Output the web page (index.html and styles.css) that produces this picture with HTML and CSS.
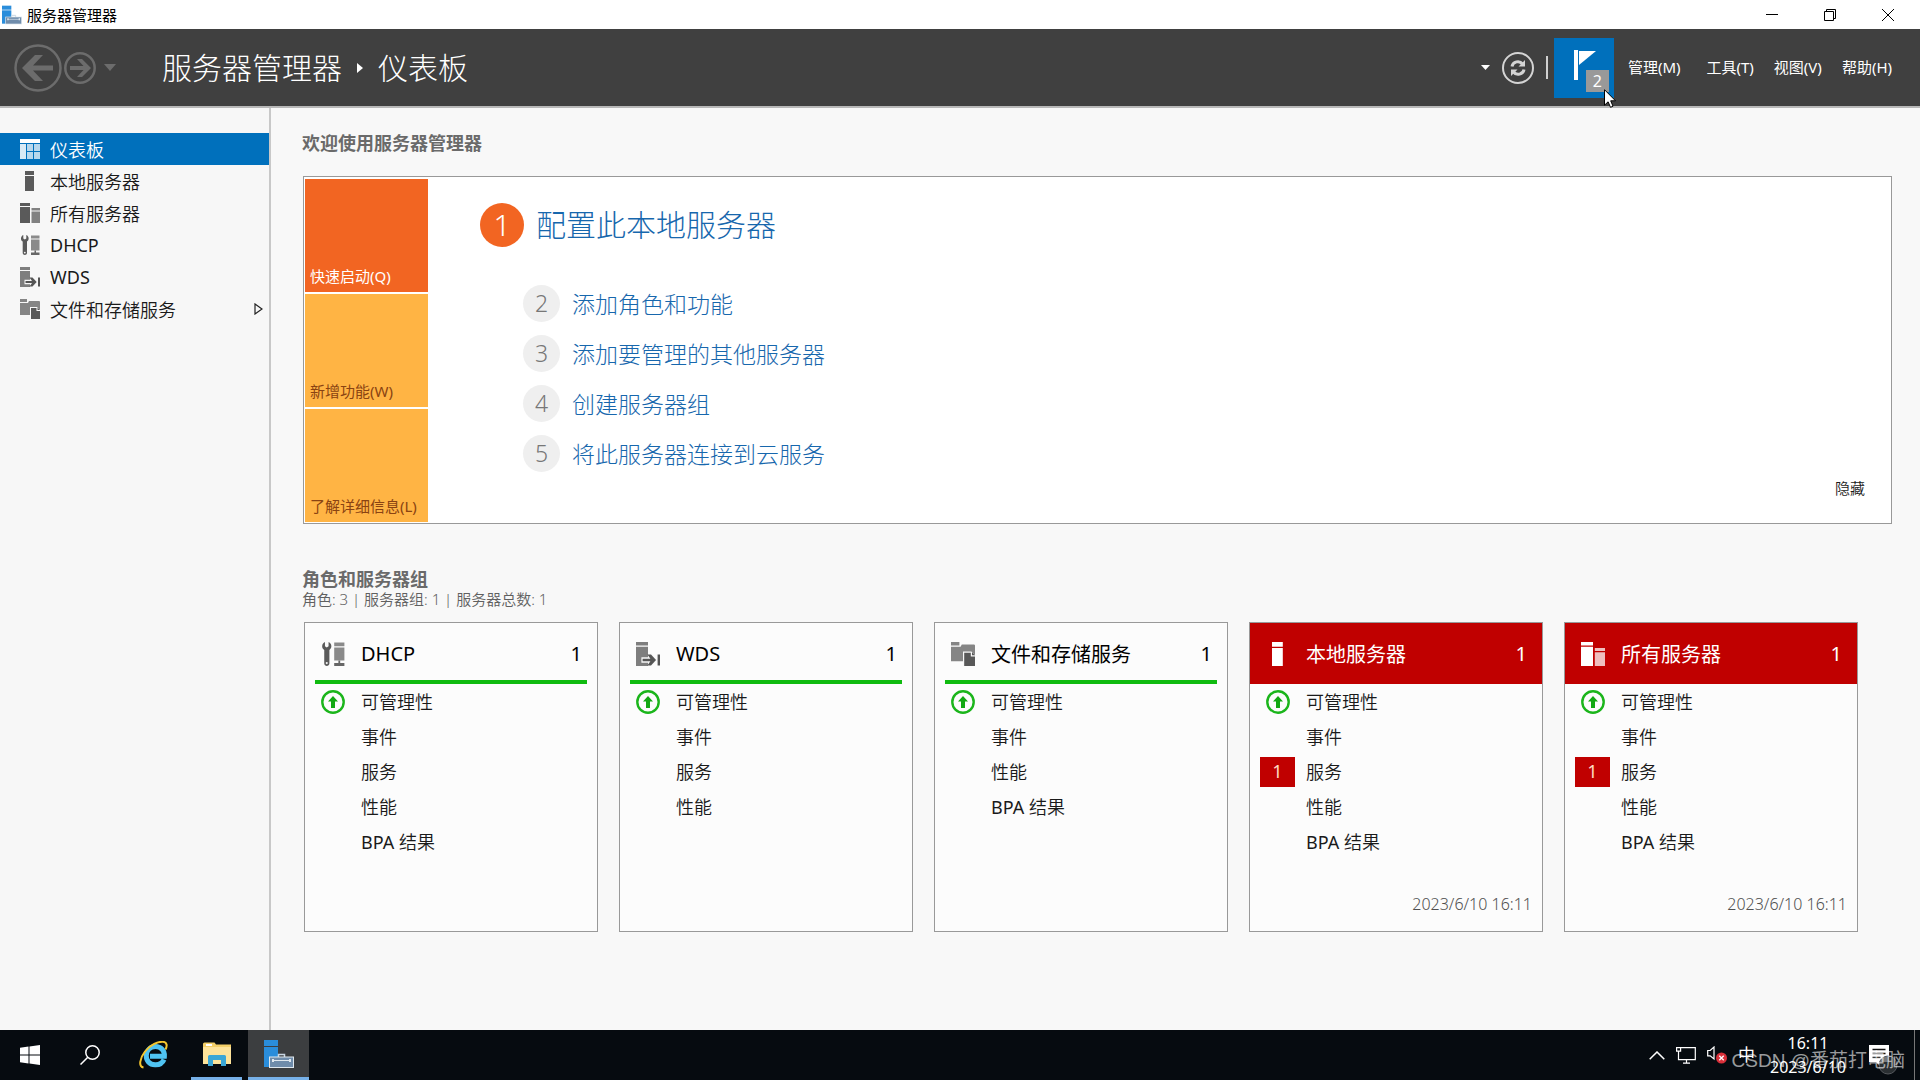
FILE: index.html
```html
<!DOCTYPE html>
<html lang="zh-CN">
<head>
<meta charset="utf-8">
<title>服务器管理器</title>
<link rel="stylesheet" href="styles.css">
</head>
<body>
<svg class="defs" aria-hidden="true">
  <symbol id="i-app" viewBox="0 0 30 28">
    <rect x="0" y="0" width="14" height="6" fill="#2a8ddb"/>
    <rect x="0" y="7" width="14" height="20" fill="#2a8ddb"/>
    <path d="M14.500 17v-2.500h6V17" fill="none" stroke="#c9d6e2" stroke-width="1.500"/>
    <rect x="5.500" y="17" width="24" height="10.500" fill="#6f8cab" stroke="#dfe7ee"/>
    <path d="M8 20.500h19" stroke="#dfe7ee"/>
    <path d="M9 19v3M26 19v3" stroke="#dfe7ee" stroke-width="2"/>
  </symbol>
  <symbol id="i-dash" viewBox="0 0 20 20">
    <path d="M0 0h20v4H0z" fill="#fff"/>
    <path d="M0 5h6v15H0z" fill="#fff" opacity=".85"/>
    <path d="M7 5h6v7H7zM14 5h6v7h-6zM7 13h6v7H7zM14 13h6v7h-6z" fill="#fff" opacity=".72"/>
  </symbol>
  <symbol id="i-server" viewBox="0 0 20 20">
    <path d="M5 0h9v4H5zM5 5h9v15H5z" fill="currentColor"/>
  </symbol>
  <symbol id="i-servers" viewBox="0 0 20 20">
    <path d="M0 0h10v3H0zM0 4h10v16H0z" fill="currentColor"/>
    <path d="M11.500 5H20v2.500h-8.500zM11.500 8.500H20V20h-8.500z" fill="currentColor" opacity=".75"/>
  </symbol>
  <symbol id="i-dhcp" viewBox="0 0 20 20">
    <path d="M11 .5h8.500v3H11zM11 4.500h8.500v11H11z" fill="#8a8a8a"/>
    <path d="M14.500 15.500h1.500v2h3.500V20h-8.500v-2.500h3.500z" fill="#666"/>
    <path d="M3.300 0v3.500l1.500 1 1.500-1V0C8 .7 8.800 2.200 8.600 4c-.1 1.200-.8 2-1.600 2.600V18c0 2.600-4.300 2.600-4.300 0V6.600C1.700 6 1 5.200 1 4 .8 2.200 1.700.7 3.300 0z" fill="#5a5a5a"/>
    <circle cx="4.800" cy="17.600" r=".9" fill="#f4f4f4"/>
  </symbol>
  <symbol id="i-wds" viewBox="0 0 20 20">
    <path d="M0 0h10v3H0zM0 4h10v16H0z" fill="#7e7e7e"/>
    <path d="M4.500 12.700h5.500V9.500h3l5 5.500-5 5h-3v-2.700H4.500z" fill="#f8f8f8"/>
    <path d="M5.500 14h6.500l-2.500-3.500h3l4.200 4.500-4.200 4.500h-3L12 16H5.500zM18 10.500h2v9h-2z" fill="#555"/>
  </symbol>
  <symbol id="i-files" viewBox="0 0 20 20">
    <path d="M0 0h7v3H0zM0 4h8l1-2h10q1 0 1 1v13H0z" fill="#858585"/>
    <path d="M10 8h7l3 3v9H10z" fill="#f8f8f8"/>
    <path d="M11 9h5.500v3H20v8h-9zM17.500 8.500l2.500 2.500h-2.500z" fill="#585858"/>
  </symbol>
  <symbol id="i-up" viewBox="0 0 24 24">
    <circle cx="12" cy="12" r="10.700" fill="none" stroke="#1bb51b" stroke-width="2.400"/>
    <path d="M12 6l5 5.500h-3V18h-4v-6.500H7z" fill="#12a812"/>
  </symbol>
</svg>

<header class="titlebar">
  <svg class="titlebar-icon"><use href="#i-app"/></svg>
  <span class="titlebar-text">服务器管理器</span>
  <button class="win-btn" aria-label="最小化"><svg viewBox="0 0 12 12"><path d="M0 5.500h12"/></svg></button>
  <button class="win-btn" aria-label="还原"><svg viewBox="0 0 12 12"><path d="M.5 2.500h9v9h-9zM2.500 2.500v-2h9v9h-2"/></svg></button>
  <button class="win-btn" aria-label="关闭"><svg viewBox="0 0 12 12"><path d="M0 0l12 12M12 0L0 12"/></svg></button>
</header>

<div class="banner">
  <div class="history">
    <button class="icon-btn" aria-label="后退"><svg width="48" height="48" viewBox="0 0 48 48"><circle cx="24" cy="24" r="22.500" fill="none" stroke="#6c6c6c" stroke-width="2.500"/><path d="M8 24l13-13h8l-10 10.500h20v5H19L29 37h-8z" fill="#6c6c6c"/></svg></button>
    <button class="icon-btn" aria-label="前进"><svg width="32" height="32" viewBox="0 0 32 32"><circle cx="16" cy="16" r="14.700" fill="none" stroke="#6c6c6c" stroke-width="2.500"/><path d="M27 16l-9 9h-5l6.500-7H6v-4h13.500L13 7h5z" fill="#6c6c6c"/></svg></button>
    <button class="icon-btn caret" aria-label="历史记录"><svg width="12" height="7" viewBox="0 0 12 7"><path d="M0 0h12L6 7z" fill="#6c6c6c"/></svg></button>
  </div>
  <h1 class="crumbs">服务器管理器<svg class="crumb-sep" viewBox="0 0 6 10"><path d="M0 0l6 5-6 5z" fill="#fff"/></svg>仪表板</h1>
  <div class="tools">
    <button class="icon-btn" aria-label="更多"><svg width="9" height="5" viewBox="0 0 9 5"><path d="M0 0h9L4.500 5z" fill="#fff"/></svg></button>
    <button class="icon-btn" aria-label="刷新"><svg width="32" height="32" viewBox="0 0 32 32" fill="none" stroke="#d4d4d4"><circle cx="16" cy="16" r="15" stroke-width="2"/><path d="M10 14.500c.8-5 7.500-6.500 10.500-2.500M22 17.500c-.8 5-7.500 6.500-10.500 2.500" stroke-width="3"/><path d="M23 8v6.500h-6.500zM9 24v-6.500h6.500z" fill="#d4d4d4" stroke="none"/></svg></button>
    <span class="divider"></span>
    <button class="flag" aria-label="通知">
      <svg width="22" height="30" viewBox="0 0 22 30"><path d="M0 0h4v30H0z" fill="#fff"/><path d="M5 1h17L5 15z" fill="#fff"/></svg>
      <span class="flag-count">2</span>
      <svg class="cursor" viewBox="0 0 12 19"><path d="M.5.7v15.500l3.600-3.400 2.400 5.500 2.500-1.100-2.300-5.400h4.800z" fill="#fff" stroke="#000"/></svg>
    </button>
    <nav class="menus">
      <button>管理(M)</button><button>工具(T)</button><button>视图(V)</button><button>帮助(H)</button>
    </nav>
  </div>
</div>

<div class="body">
  <nav class="side">
    <a class="side-item active" href="#"><svg><use href="#i-dash"/></svg>仪表板</a>
    <a class="side-item" href="#"><svg><use href="#i-server"/></svg>本地服务器</a>
    <a class="side-item" href="#"><svg><use href="#i-servers"/></svg>所有服务器</a>
    <a class="side-item latin" href="#"><svg><use href="#i-dhcp"/></svg>DHCP</a>
    <a class="side-item latin" href="#"><svg><use href="#i-wds"/></svg>WDS</a>
    <a class="side-item" href="#"><svg><use href="#i-files"/></svg>文件和存储服务<svg class="expand" viewBox="0 0 9 12"><path d="M1 1l7 5-7 5z" fill="none" stroke="#222" stroke-width="1.200"/></svg></a>
  </nav>

  <main class="main">
    <h2 class="section-title">欢迎使用服务器管理器</h2>
    <section class="welcome">
      <div class="tabs">
        <button class="tab tab-on">快速启动(Q)</button>
        <button class="tab">新增功能(W)</button>
        <button class="tab">了解详细信息(L)</button>
      </div>
      <ol class="steps">
        <li class="step step-first"><span class="num">1</span><a href="#">配置此本地服务器</a></li>
        <li class="step"><span class="num">2</span><a href="#">添加角色和功能</a></li>
        <li class="step"><span class="num">3</span><a href="#">添加要管理的其他服务器</a></li>
        <li class="step"><span class="num">4</span><a href="#">创建服务器组</a></li>
        <li class="step"><span class="num">5</span><a href="#">将此服务器连接到云服务</a></li>
      </ol>
      <button class="hide">隐藏</button>
    </section>

    <h2 class="section-title groups-title">角色和服务器组</h2>
    <p class="summary">角色: 3 | 服务器组: 1 | 服务器总数: 1</p>
    <div class="cards">
      <article class="card">
        <h3 class="card-head"><svg class="card-icon"><use href="#i-dhcp"/></svg><span>DHCP</span><span>1</span></h3>
        <ul>
          <li><svg class="ok"><use href="#i-up"/></svg><span>可管理性</span></li>
          <li><span>事件</span></li><li><span>服务</span></li><li><span>性能</span></li><li><span><span class="latin">BPA</span> 结果</span></li>
        </ul>
      </article>
      <article class="card">
        <h3 class="card-head"><svg class="card-icon"><use href="#i-wds"/></svg><span>WDS</span><span>1</span></h3>
        <ul>
          <li><svg class="ok"><use href="#i-up"/></svg><span>可管理性</span></li>
          <li><span>事件</span></li><li><span>服务</span></li><li><span>性能</span></li>
        </ul>
      </article>
      <article class="card">
        <h3 class="card-head"><svg class="card-icon"><use href="#i-files"/></svg><span>文件和存储服务</span><span>1</span></h3>
        <ul>
          <li><svg class="ok"><use href="#i-up"/></svg><span>可管理性</span></li>
          <li><span>事件</span></li><li><span>性能</span></li><li><span><span class="latin">BPA</span> 结果</span></li>
        </ul>
      </article>
      <article class="card alert">
        <h3 class="card-head"><svg class="card-icon"><use href="#i-server"/></svg><span>本地服务器</span><span>1</span></h3>
        <ul>
          <li><svg class="ok"><use href="#i-up"/></svg><span>可管理性</span></li>
          <li><span>事件</span></li><li><b class="count">1</b><span>服务</span></li><li><span>性能</span></li><li><span><span class="latin">BPA</span> 结果</span></li>
        </ul>
        <time>2023/6/10 16:11</time>
      </article>
      <article class="card alert">
        <h3 class="card-head"><svg class="card-icon"><use href="#i-servers"/></svg><span>所有服务器</span><span>1</span></h3>
        <ul>
          <li><svg class="ok"><use href="#i-up"/></svg><span>可管理性</span></li>
          <li><span>事件</span></li><li><b class="count">1</b><span>服务</span></li><li><span>性能</span></li><li><span><span class="latin">BPA</span> 结果</span></li>
        </ul>
        <time>2023/6/10 16:11</time>
      </article>
    </div>
  </main>
</div>

<footer class="taskbar">
  <button class="task" aria-label="开始"><svg width="20" height="20" viewBox="0 0 20 20"><path d="M0 2.800L8.500 1.600V9.500H0zM9.500 1.400L20 0v9.500H9.500zM0 10.500h8.500v8L0 17.300zM9.500 10.500H20V20L9.500 18.600z" fill="#fff"/></svg></button>
  <button class="task" aria-label="搜索"><svg width="20" height="20" viewBox="0 0 20 20" fill="none" stroke="#fff" stroke-width="1.500"><circle cx="12.500" cy="7.500" r="6.700"/><path d="M7.800 12.200L.5 19.500"/></svg></button>
  <button class="task browser" aria-label="Internet Explorer"><svg width="30" height="28" viewBox="0 0 30 28" fill="none"><path d="M25 18.500c-1.500 3.500-5 5.500-9 5.300-5.500-.2-9-4.300-8.700-9.300.3-5.500 4.200-9 9.200-9 5.500 0 9.300 4 8.900 9.700H11" stroke="#4fc3f2" stroke-width="5"/><path d="M4.500 26.500C-1 25.500 1 17 6 10.500 11.500 3.500 19 .5 24 .8c4 .3 4.500 4 2.500 7.700" stroke="#f5c62e" stroke-width="2"/></svg></button>
  <button class="task running" aria-label="文件资源管理器"><svg width="28" height="24" viewBox="0 0 28 24"><path d="M0 2q0-1.500 1.500-1.500h10L13 2.500h15V22H0z" fill="#f3cf68"/><path d="M0 5h28v17H0z" fill="#fde39a"/><path d="M3 2h6v2H3z" fill="#fff"/><path d="M5 24V14.500Q5 13 6.500 13h15q1.500 0 1.500 1.500V24h-5v-6h-8v6z" fill="#3ba7d6"/></svg></button>
  <button class="task running current" aria-label="服务器管理器"><svg width="30" height="28"><use href="#i-app"/></svg></button>
  <div class="tray">
    <svg width="16" height="9" viewBox="0 0 16 9" fill="none" stroke="#fff" stroke-width="1.500"><path d="M.7 8.300L8 1l7.300 7.300"/></svg>
    <svg width="20" height="17" viewBox="0 0 20 17" fill="none" stroke="#fff" stroke-width="1.200"><path d="M5 .7h14.300v12H2.500V6.500M10.500 13v3M7 16.200h7M.6.7h4v3.500h-4zM2.500 4v3"/></svg>
    <svg width="20" height="18" viewBox="0 0 20 18"><path d="M.7 4.500h2.500L7 1v12L3.200 9.800H.7z" fill="none" stroke="#fff" stroke-width="1.200"/><circle cx="14.500" cy="12" r="5.500" fill="#d9303a"/><path d="M12.300 9.800l4.400 4.400M16.700 9.800l-4.400 4.400" stroke="#fff" stroke-width="1.300"/></svg>
    <span class="ime">中</span>
    <div class="clock"><span>16:11</span><span>2023/6/10</span></div>
    <svg class="notice" width="29" height="31" viewBox="0 0 29 31"><path d="M0 0h20v17h-9v4l-4-4H0z" fill="#fff"/><path d="M3.500 4.500h13M3.500 8.500h13M3.500 12.500h8" stroke="#111" stroke-width="1.500"/><circle cx="19" cy="20" r="9" fill="#3a3e42" fill-opacity=".7" stroke="#55595d"/></svg>
    <span class="show-desktop"></span>
    <span class="watermark">CSDN @番茄打电脑</span>
  </div>
</footer>
</body>
</html>
```
FILE: styles.css
```css
* { box-sizing: border-box; }

body {
  margin: 0;
  min-height: 100vh;
  display: grid;
  grid-template-rows: 29px 79px 1fr 50px;
  background: #f8f8f8;
  color: #1a1a1a;
  font-family: "Noto Sans", "Noto Sans CJK SC", sans-serif;
  font-size: 18px;
  font-weight: 350;
}

button {
  padding: 0;
  border: 0;
  background: none;
  color: inherit;
  font: inherit;
}

a { color: inherit; text-decoration: none; }
h1, h2, h3, p, ul, ol { margin: 0; padding: 0; font: inherit; list-style: none; }
svg { display: block; flex: none; }
.defs { position: absolute; width: 0; height: 0; }
.latin { font-weight: 400; }

/* Title bar */
.titlebar { display: flex; align-items: center; padding-right: 3px; background: #fff; color: #000; }
.titlebar-icon { width: 20px; height: 20px; margin: 0 5px 0 2px; }
.titlebar-text { flex: 1; font-size: 15px; line-height: 28px; font-weight: 400; }
.win-btn { width: 58px; height: 28px; display: grid; place-items: center; }
.win-btn svg { width: 12px; height: 12px; fill: none; stroke: #000; }

/* Banner */
.banner {
  display: flex;
  align-items: center;
  background: #404040;
  border-bottom: 2px solid #b8b8b8;
  color: #fff;
}
.history { width: 162px; display: flex; align-items: center; gap: 2px; padding-left: 14px; }
.icon-btn { display: grid; place-items: center; }
.caret { margin-left: 6px; }
.crumbs { display: flex; align-items: center; gap: 15px; font-size: 30px; line-height: 40px; font-weight: 300; }
.crumb-sep { width: 6px; height: 10px; }
.tools { margin-left: auto; display: flex; align-items: center; padding-right: 28px; gap: 12px; }
.divider { width: 2px; height: 23px; background: #d0d0d0; }
.flag {
  position: relative;
  display: flex;
  align-items: flex-start;
  width: 60px;
  height: 60px;
  margin-left: -6px;
  padding: 12px 0 0 20px;
  background: #0070bc;
}
.flag-count {
  position: absolute;
  right: 5px;
  bottom: 6px;
  width: 23px;
  height: 22px;
  background: #999;
  font-size: 16px;
  line-height: 23px;
  font-weight: 400;
}
.cursor { position: absolute; left: 50px; top: 51px; width: 12px; height: 19px; }
.menus { display: flex; gap: 20px; padding-left: 2px; font-size: 15px; line-height: 22px; font-weight: 400; }
.menus button { padding-bottom: 2px; }
.menus button:first-child { margin-right: 6px; }

/* Navigation */
.body { display: grid; grid-template-columns: 271px 1fr; }
.side { padding-top: 25px; border-right: 2px solid #c8c8c8; background: #f7f7f7; }
.side-item { display: flex; align-items: center; height: 32px; padding: 0 6px 0 20px; gap: 10px; }
.side-item svg { width: 20px; height: 20px; color: #5a5a5a; }
.side-item .expand { width: 9px; height: 12px; margin-left: auto; }
.active { background: #0070bc; color: #fff; }

/* Dashboard */
.main { padding: 21px 28px 40px 32px; }
.section-title { margin-left: -1px; color: #6a6a6a; font-weight: 700; line-height: 28px; }
.welcome {
  display: flex;
  margin: 19px 0 0;
  padding: 2px 1px 1px;
  border: 1px solid #999;
  background: #fff;
}
.tabs { width: 123px; display: grid; grid-auto-rows: 113px; gap: 2px; }
.tab {
  display: flex;
  align-items: flex-end;
  padding: 0 5px 5px;
  background: #ffb444;
  color: #8a4312;
  font-size: 15px;
  line-height: 22px;
  font-weight: 400;
}
.tab-on { background: #f26522; color: #fff; }
.steps { flex: 1; padding: 24px 0 0 95px; font-weight: 300; }
.step { display: flex; align-items: center; gap: 12px; height: 37px; margin-bottom: 13px; color: #1767ad; font-size: 23px; line-height: 32px; }
.step .num { width: 37px; height: 37px; border-radius: 50%; background: #efefef; color: #777; text-align: center; line-height: 36px; }
.step-first { height: 44px; margin: 0 0 38px -43px; font-size: 30px; line-height: 44px; }
.step-first .num { width: 44px; height: 44px; background: #f26522; color: #fff; line-height: 43px; }
.hide { align-self: flex-end; margin: 0 25px 23px 0; font-size: 15px; line-height: 22px; }

.groups-title { margin-top: 44px; line-height: 22px; }
.summary { margin: 0 0 14px -1px; color: #606060; font-size: 15px; line-height: 18px; }

.cards { display: grid; grid-template-columns: repeat(auto-fill, 294px); gap: 21px; padding-left: 1px; }
.card { display: flex; flex-direction: column; min-height: 310px; border: 1px solid #999; background: #fcfcfc; }
.card-head, .card li { display: grid; grid-template-columns: 35px 1fr auto; column-gap: 11px; align-items: center; }
.card-head {
  height: 61px;
  margin: 0 10px;
  padding-right: 5px;
  box-shadow: inset 0 -4px #10bb10;
  color: #000;
  font-size: 20px;
  font-weight: 400;
}
.card-icon { width: 24px; height: 24px; justify-self: center; }
.card li { height: 35px; padding: 0 10px; line-height: 24px; }
.card li > span { grid-column: 2; grid-row: 1; }
.ok { width: 24px; height: 24px; justify-self: center; }
.count { height: 30px; background: #c00000; color: #ffd9c0; text-align: center; font-weight: 400; line-height: 29px; }
.alert .card-head { margin: 0; padding: 0 15px 0 10px; background: #c00000; box-shadow: none; color: #fff; }
.card time { margin: auto 10px 16px auto; color: #505050; font-size: 16px; line-height: 22px; }

/* Taskbar */
.taskbar { display: flex; background: #060b10; color: #fff; }
.task { width: 60px; display: grid; place-items: center; }
.browser { width: 68px; margin-right: 3px; }
.running { width: 51px; border-bottom: 3px solid #76b0e8; }
.current { width: 61px; margin-left: 6px; background: #3c3e40; }
.tray { position: relative; margin-left: auto; display: flex; align-items: center; gap: 11px; font-weight: 400; }
.ime { font-size: 17px; line-height: 24px; }
.clock { width: 84px; display: grid; text-align: center; font-size: 16px; line-height: 24px; }
.notice { align-self: flex-end; margin-left: 8px; margin-bottom: 4px; }
.show-desktop { align-self: stretch; width: 6px; margin-left: 5px; border-left: 1px solid #777; }
.watermark {
  position: absolute;
  right: 15px;
  top: 17px;
  color: rgba(255, 255, 255, 0.6);
  font-family: "Liberation Sans", "Noto Sans CJK SC", sans-serif;
  font-size: 19px;
  line-height: 28px;
  white-space: nowrap;
}
```
